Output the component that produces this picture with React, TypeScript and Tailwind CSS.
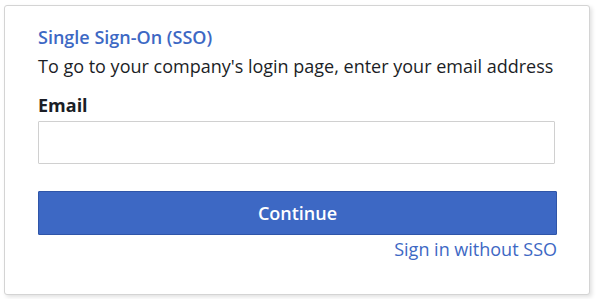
import React from "react";

const App = () => {
  return (
    <div className="w-[599px] h-[299px] bg-white pt-[5px] pl-[4px] font-['Open_Sans',sans-serif]">
      <div className="w-[586px] h-[290px] border border-[#d4d4d4] rounded-[3px] bg-white shadow-[2px_2px_4px_rgba(0,0,0,0.12)] pt-[18px] pl-[33px] pr-[20px]">
        <h2 className="text-[18px] leading-[27px] font-semibold text-[#3d68c4]">
          Single Sign-On (SSO)
        </h2>
        <p className="mt-[2px] text-[18px] leading-[27px] text-[#1b1e26] whitespace-nowrap">
          To go to your company's login page, enter your email address
        </p>
        <label className="block mt-[12px] text-[18px] leading-[27px] font-bold text-[#1b1e26]">
          Email
        </label>
        <input
          type="email"
          className="block mt-[2px] w-[517px] h-[43px] border border-[#d0d0d0] rounded-[1px] bg-white px-3 outline-none"
        />
        <button className="block mt-[27px] w-[519px] h-[44px] bg-[#3d68c4] border border-[#2f55a8] rounded-[1px] text-white text-[18px] font-semibold">
          Continue
        </button>
        <div className="w-[519px] mt-[1px] flex justify-end">
          <a className="text-[18px] leading-[27px] text-[#3d68c4] cursor-pointer">
            Sign in without SSO
          </a>
        </div>
      </div>
    </div>
  );
};

export default App;
